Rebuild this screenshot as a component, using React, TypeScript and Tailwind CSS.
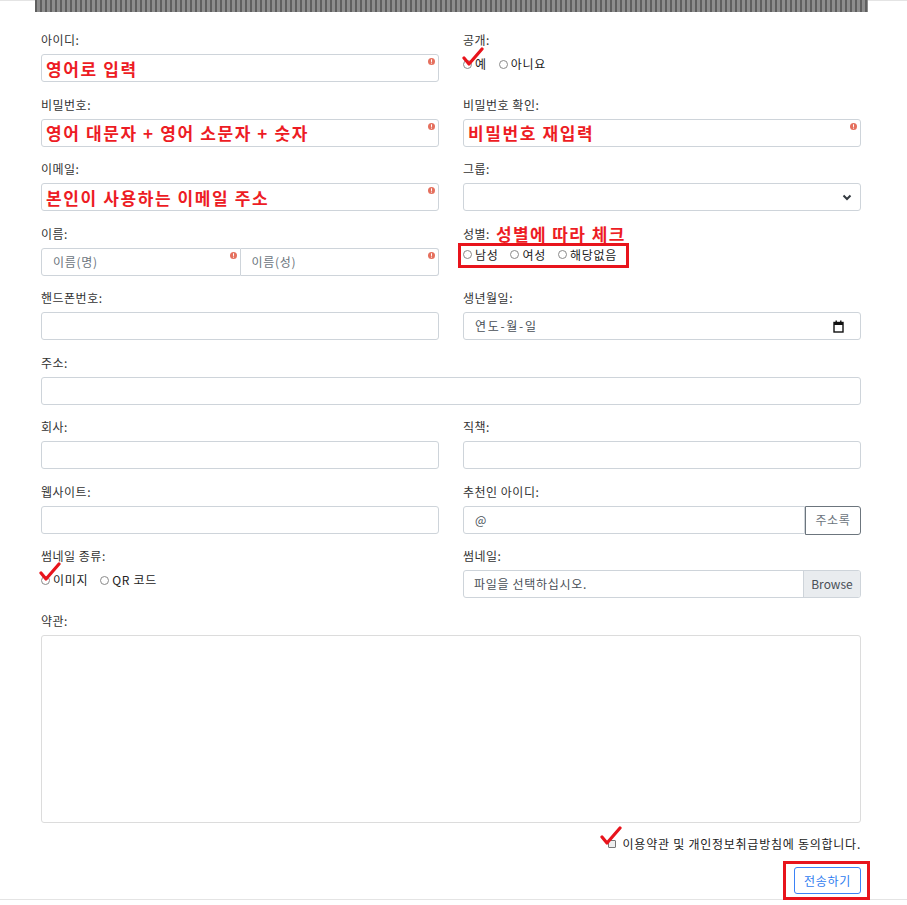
import React from "react";

const font = { fontFamily: '"Noto Sans CJK KR", "Noto Sans", sans-serif' };

const labelCls = "block text-[12px] leading-[18px] tracking-[0.5px] text-[#333] mb-[5px]";
const inputCls = "relative h-[28px] border border-[#ced4da] rounded-[3px] bg-white flex items-center";

function Alert() {
  return (
    <svg className="absolute right-[3px] top-[3px]" width="7" height="7" viewBox="0 0 7 7">
      <circle cx="3.5" cy="3.5" r="3.5" fill="#e5705e" />
      <rect x="3" y="1.3" width="1" height="2.6" fill="#fff" />
      <rect x="3" y="4.6" width="1" height="1" fill="#fff" />
    </svg>
  );
}

function Check({ className }: { className: string }) {
  return (
    <svg className={`absolute pointer-events-none ${className}`} width="22" height="20" viewBox="0 0 22 20">
      <path d="M2 11 L7 17 L20 2" fill="none" stroke="#e8141c" strokeWidth="3.2" strokeLinecap="round" strokeLinejoin="round" />
    </svg>
  );
}

function Radio({ label, first }: { label: string; first?: boolean }) {
  return (
    <span className={`inline-flex items-center ${first ? "" : "ml-[12px]"}`}>
      <span className="w-[9px] h-[9px] rounded-full border border-[#8a8a8a] bg-white mr-[3px]" />
      <span className="text-[12px] tracking-[0.7px] text-[#222]">{label}</span>
    </span>
  );
}

function Field({ label, children, className = "" }: { label: React.ReactNode; children: React.ReactNode; className?: string }) {
  return (
    <div className={className}>
      <div className={labelCls}>{label}</div>
      {children}
    </div>
  );
}

function RedText({ children }: { children: React.ReactNode }) {
  return <span className="pl-[4px] text-[17px] font-bold tracking-[1.6px] text-[#ed1c24] leading-none">{children}</span>;
}

export default function App() {
  return (
    <div style={font} className="w-[907px] h-[905px] bg-white overflow-hidden">
      <div className="border-t border-b border-[#e4e4e4] h-[900px]">
        {/* top strip */}
        <div className="-mt-px ml-[35px] w-[833px] h-[12px] bg-[#777] bg-[repeating-linear-gradient(90deg,#5f5f5f_0px,#5f5f5f_2px,#8d8d8d_2px,#8d8d8d_5px)]" />

        <div className="ml-[41px] w-[820px] mt-[19px] grid grid-cols-2 gap-x-6 gap-y-[13.5px]">
          <Field label="아이디:">
            <div className={inputCls}>
              <RedText>영어로 입력</RedText>
              <Alert />
            </div>
          </Field>
          <Field label="공개:">
            <div className="relative h-[20px] flex items-center">
              <Radio label="예" first />
              <Radio label="아니요" />
              <Check className="-left-[1px] -top-[7px]" />
            </div>
          </Field>

          <Field label="비밀번호:">
            <div className={inputCls}>
              <RedText>영어 대문자 + 영어 소문자 + 숫자</RedText>
              <Alert />
            </div>
          </Field>
          <Field label="비밀번호 확인:">
            <div className={inputCls}>
              <RedText>비밀번호 재입력</RedText>
              <Alert />
            </div>
          </Field>

          <Field label="이메일:">
            <div className={inputCls}>
              <RedText>본인이 사용하는 이메일 주소</RedText>
              <Alert />
            </div>
          </Field>
          <Field label="그룹:">
            <div className={`${inputCls} justify-end pr-[8px]`}>
              <svg width="10" height="7" viewBox="0 0 10 7">
                <path d="M1.5 1.5 L5 5 L8.5 1.5" fill="none" stroke="#343a40" strokeWidth="2" />
              </svg>
            </div>
          </Field>

          <Field label="이름:">
            <div className="flex h-[28px]">
              <div className="relative flex-1 flex items-center border border-[#ced4da] rounded-l-[3px] pl-[11px] text-[12px] tracking-[0.7px] text-[#6c757d]">
                이름(명)
                <Alert />
              </div>
              <div className="relative flex-1 flex items-center border border-l-0 border-[#ced4da] rounded-r-[3px] pl-[11px] text-[12px] tracking-[0.7px] text-[#6c757d]">
                이름(성)
                <Alert />
              </div>
            </div>
          </Field>
          <div>
            <div className="flex items-center h-[18px] mb-[5px]">
              <span className="text-[12px] leading-[18px] tracking-[0.5px] text-[#333]">성별:</span>
              <span className="ml-[6px] text-[17px] leading-[18px] font-bold tracking-[1.4px] text-[#ed1c24]">성별에 따라 체크</span>
            </div>
            <div className="relative h-[20px] -mt-[3px] flex items-center">
              <Radio label="남성" first />
              <Radio label="여성" />
              <Radio label="해당없음" />
              <div className="absolute -left-[5px] -top-[2px] w-[171px] h-[25px] border-[3px] border-[#e8141c]" />
            </div>
          </div>

          <Field label="핸드폰번호:">
            <div className={inputCls} />
          </Field>
          <Field label="생년월일:">
            <div className={`${inputCls} justify-between pl-[11px] pr-[16px] text-[12px] text-[#495057]`}>
              <span className="tracking-[1.7px]">연도-월-일</span>
              <svg width="11" height="13" viewBox="0 0 11 13">
                <rect x="1" y="2.5" width="9" height="9.5" fill="none" stroke="#111" strokeWidth="1.4" />
                <rect x="1" y="2.5" width="9" height="2.5" fill="#111" />
                <rect x="2.5" y="0.5" width="1.4" height="2.5" fill="#111" />
                <rect x="7.1" y="0.5" width="1.4" height="2.5" fill="#111" />
              </svg>
            </div>
          </Field>

          <Field label="주소:" className="col-span-2">
            <div className={inputCls} />
          </Field>

          <Field label="회사:">
            <div className={inputCls} />
          </Field>
          <Field label="직책:">
            <div className={inputCls} />
          </Field>

          <Field label="웹사이트:">
            <div className={inputCls} />
          </Field>
          <Field label="추천인 아이디:">
            <div className="flex h-[28px]">
              <div className="flex-1 flex items-center border border-[#ced4da] rounded-l-[3px] pl-[11px] text-[12px] text-[#495057]">@</div>
              <div className="w-[56px] flex items-center justify-center border border-[#6c757d] rounded-r-[3px] h-[29px] text-[12px] tracking-[0.7px] text-[#6c757d]">주소록</div>
            </div>
          </Field>

          <Field label="썸네일 종류:">
            <div className="relative h-[20px] flex items-center">
              <Radio label="이미지" first />
              <Radio label="QR 코드" />
              <Check className="-left-[2px] -top-[8px]" />
            </div>
          </Field>
          <Field label="썸네일:">
            <div className="flex h-[28px] border border-[#ced4da] rounded-[3px] text-[12px] text-[#495057] overflow-hidden">
              <div className="flex-1 flex items-center pl-[10px] tracking-[0.7px]">파일을 선택하십시오.</div>
              <div className="w-[57px] flex items-center justify-center bg-[#e9ecef] border-l border-[#ced4da]">Browse</div>
            </div>
          </Field>

          <Field label="약관:" className="col-span-2">
            <div className="h-[188px] border border-[#dcdcdc] rounded-[3px] bg-white" />
          </Field>
        </div>

        <div className="ml-[41px] w-[820px] mt-[13px] flex justify-end">
          <div className="relative flex items-center h-[16px]">
            <span className="w-[8px] h-[8px] border border-[#777] rounded-[1px] bg-[#eee] mr-[7px]" />
            <span className="text-[12px] tracking-[0.75px] text-[#222]">이용약관 및 개인정보취급방침에 동의합니다.</span>
            <Check className="-left-[8px] -top-[10px]" />
          </div>
        </div>

        <div className="ml-[41px] w-[820px] mt-[15px] flex justify-end">
          <div className="relative">
            <button className="h-[27px] w-[67px] border border-[#3b82f6] rounded-[3px] text-[12px] tracking-[0.7px] text-[#2f7cf0] bg-white">전송하기</button>
            <div className="absolute -left-[11px] -top-[6px] w-[87px] h-[39px] border-[3px] border-[#e8141c]" />
          </div>
        </div>
      </div>
    </div>
  );
}
